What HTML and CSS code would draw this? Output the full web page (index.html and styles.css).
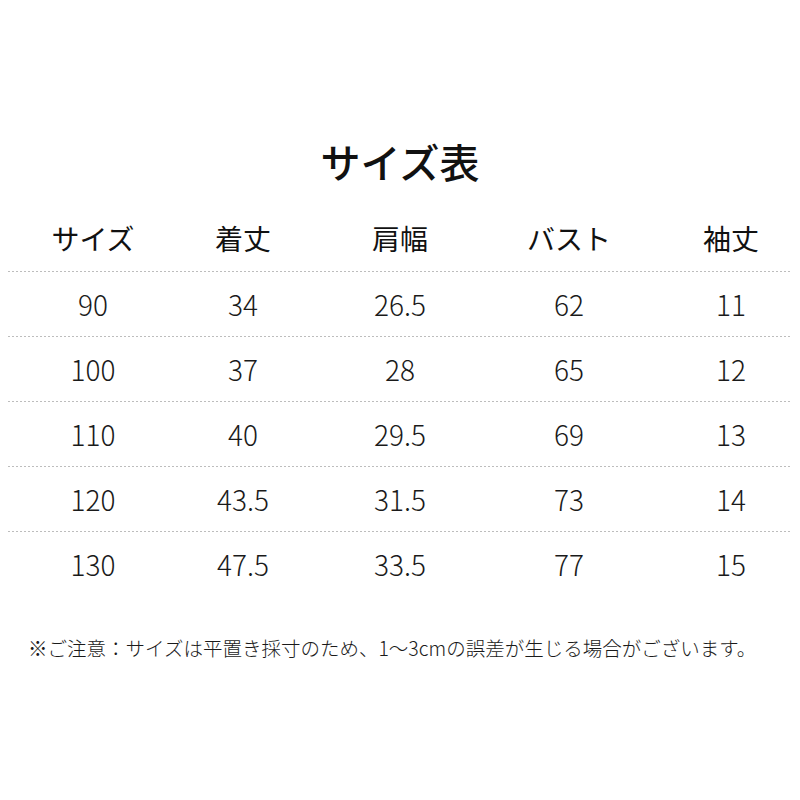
FILE: index.html
```html
<!DOCTYPE html>
<html lang="ja">
<head>
<meta charset="utf-8">
<link rel="stylesheet" href="styles.css">
</head>
<body>
<div class="page">
  <h1 class="title">サイズ表</h1>
  <div class="table">
    <div class="row head">
      <div class="cell">サイズ</div><div class="cell">着丈</div><div class="cell">肩幅</div><div class="cell">バスト</div><div class="cell last">袖丈</div>
    </div>
    <div class="row">
      <div class="cell">90</div><div class="cell">34</div><div class="cell">26.5</div><div class="cell">62</div><div class="cell last">11</div>
    </div>
    <div class="row">
      <div class="cell">100</div><div class="cell">37</div><div class="cell">28</div><div class="cell">65</div><div class="cell last">12</div>
    </div>
    <div class="row">
      <div class="cell">110</div><div class="cell">40</div><div class="cell">29.5</div><div class="cell">69</div><div class="cell last">13</div>
    </div>
    <div class="row">
      <div class="cell">120</div><div class="cell">43.5</div><div class="cell">31.5</div><div class="cell">73</div><div class="cell last">14</div>
    </div>
    <div class="row end">
      <div class="cell">130</div><div class="cell">47.5</div><div class="cell">33.5</div><div class="cell">77</div><div class="cell last">15</div>
    </div>
  </div>
  <p class="note">※ご注意：サイズは平置き採寸のため、1～3cmの誤差が生じる場合がございます。</p>
</div>
</body>
</html>
```

FILE: styles.css
```css
html, body {
  margin: 0;
  padding: 0;
  background: #ffffff;
  overflow: hidden;
}
body {
  font-family: "Noto Sans CJK JP", "Noto Sans", sans-serif;
  color: #111111;
}
.page {
  width: 800px;
  height: 800px;
  padding-top: 136px;
  box-sizing: border-box;
}
.title {
  margin: 0;
  font-size: 40px;
  line-height: 50px;
  font-weight: 500;
  text-align: center;
}
.table {
  margin: 19px 8px 0;
}
.row {
  display: grid;
  grid-template-columns: 150px 150px 164px 174px 144px;
  padding-left: 10px;
  height: 65px;
  box-sizing: border-box;
  align-items: center;
  padding-bottom: 1px;
  background-image: repeating-linear-gradient(to right, #bdbdbd 0 2px, transparent 2px 4px);
  background-size: 100% 1px;
  background-position: left bottom;
  background-repeat: no-repeat;
  font-size: 28px;
  font-weight: 300;
  color: #1a1a1a;
}
.row.head {
  height: 67px;
  font-weight: 400;
  color: #111111;
}
.row.end {
  background-image: none;
}
.cell {
  text-align: center;
  line-height: 1;
}
.cell.last {
  padding-left: 6px;
}
.note {
  margin: 36px 0 0;
  padding-left: 28px;
  font-size: 19.5px;
  line-height: 30px;
  font-weight: 300;
  color: #1a1a1a;
  white-space: nowrap;
}
```
